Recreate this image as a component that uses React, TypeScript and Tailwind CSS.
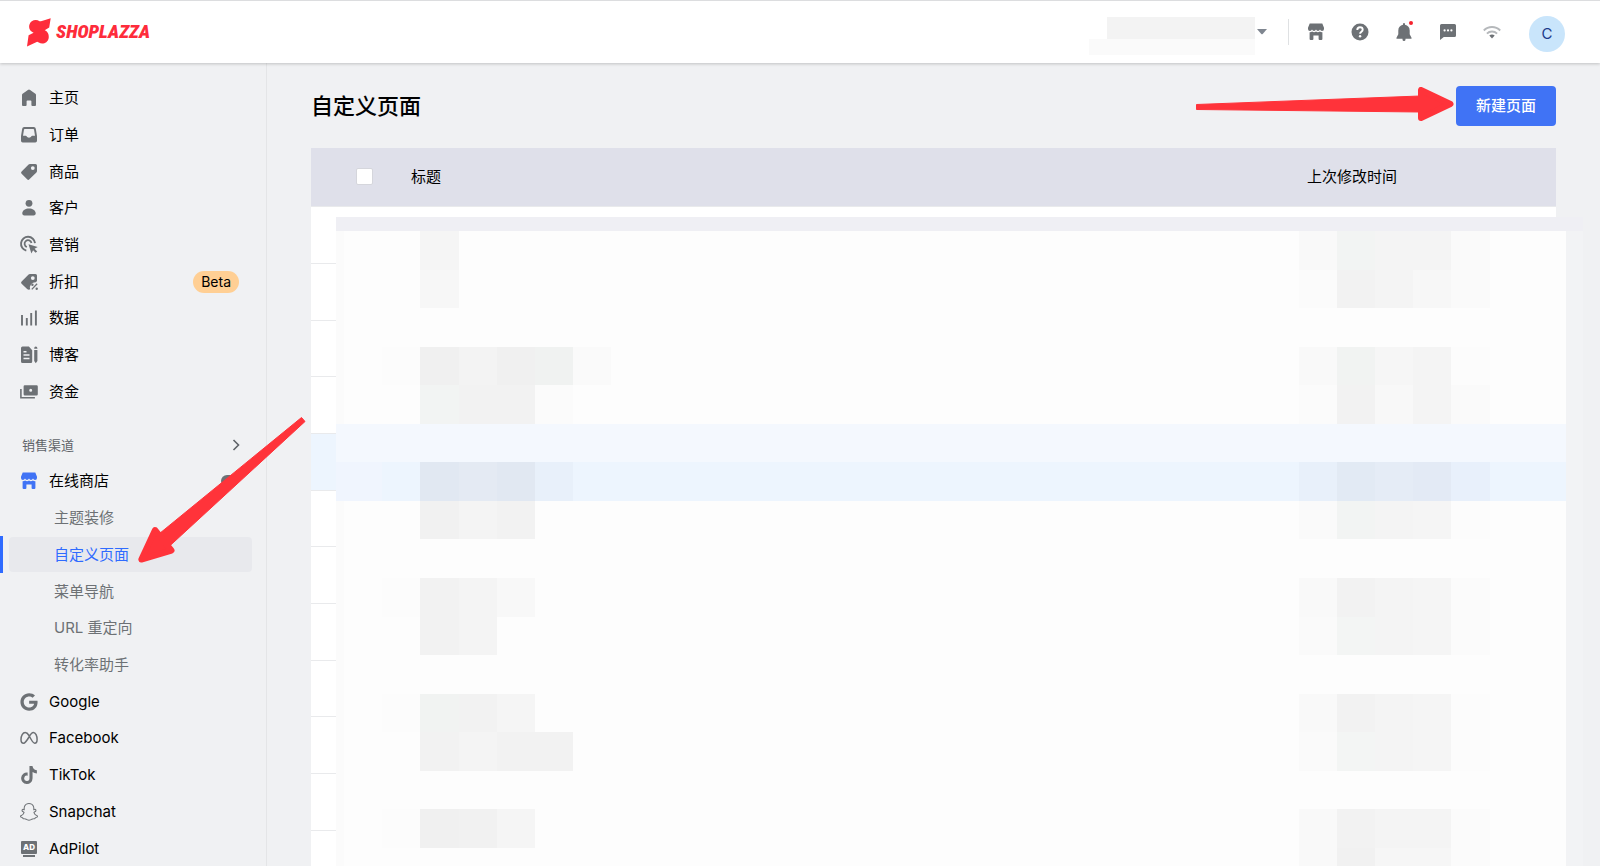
import React, { ReactNode, useState } from "react";
import { FaGoogle, FaTiktok } from "react-icons/fa";
import { BsSnapchat } from "react-icons/bs";

const Icon = ({ children }: { children: ReactNode }) => (
  <svg
    viewBox="0 0 18 18"
    fill="currentColor"
    className="w-[18px] h-[18px] shrink-0 overflow-visible"
    aria-hidden="true"
  >
    {children}
  </svg>
);

const storePath =
  "M2.7.6h12.6l1.7 4.2v1.1a2 2 0 0 1-2 2 2.2 2.2 0 0 1-2-1.3 2.2 2.2 0 0 1-4 0 2.2 2.2 0 0 1-4 0 2.2 2.2 0 0 1-2 1.3 2 2 0 0 1-2-2V4.800zM2.600 9.300c1 .1 1.800-.2 2.500-.8a3.500 3.500 0 0 0 3.900.1 3.500 3.500 0 0 0 3.900-.1c.7.6 1.500.9 2.500.8v6.700a1 1 0 0 1-1 1h-1.800a1 1 0 0 1-1-1v-3.500H6.400V16a1 1 0 0 1-1 1H3.600a1 1 0 0 1-1-1z";

const StoreIcon = () => (
  <Icon>
    <path d={storePath} />
  </Icon>
);

const mainMenu = [
  {
    name: "主页",
    icon: (
      <Icon>
        <path d="M7.900.9a1.800 1.800 0 0 1 2.200 0l5.300 3.900c.4.3.6.7.6 1.200V16a1 1 0 0 1-1 1h-2.600a1 1 0 0 1-1-1v-3.800a.8.8 0 0 0-.8-.8H7.400a.8.8 0 0 0-.8.8V16a1 1 0 0 1-1 1H3a1 1 0 0 1-1-1V6c0-.5.2-.9.6-1.200z" />
      </Icon>
    ),
  },
  {
    name: "订单",
    icon: (
      <Icon>
        <path
          fillRule="evenodd"
          d="M4.200 1h9.600a2 2 0 0 1 2 1.700L17 10v4.800a1.700 1.700 0 0 1-1.700 1.700H2.700A1.700 1.700 0 0 1 1 14.800V10l1.200-7.300a2 2 0 0 1 2-1.700zm.5 1.900a.7.7 0 0 0-.7.6L3 9.800h2.700c.6 0 .8.3 1.100.7.4.7 1.200 1.200 2.200 1.200s1.800-.5 2.200-1.200c.3-.4.5-.7 1.100-.7H15L14 3.500a.7.7 0 0 0-.7-.6z"
        />
      </Icon>
    ),
  },
  {
    name: "商品",
    icon: (
      <Icon>
        <path
          fillRule="evenodd"
          d="M9.900.9h5.600A1.500 1.500 0 0 1 17 2.400V8c0 .5-.2 1-.6 1.400l-7 6.900a1.600 1.600 0 0 1-2.300 0l-5.500-5.500a1.600 1.600 0 0 1 0-2.300l7-7c.3-.4.8-.6 1.300-.6zM12.800 7a1.900 1.900 0 1 0 0-3.800 1.900 1.900 0 0 0 0 3.800z"
        />
      </Icon>
    ),
  },
  {
    name: "客户",
    icon: (
      <Icon>
        <circle cx="9" cy="4.300" r="3.400" />
        <path d="M9 9.500c3.600 0 6.300 1.700 6.700 4.600.2 1.400-.7 2.400-2.100 2.400H4.400c-1.400 0-2.300-1-2.100-2.400C2.700 11.200 5.400 9.500 9 9.500z" />
      </Icon>
    ),
  },
  {
    name: "营销",
    icon: (
      <Icon>
        <path
          d="M6.300 14.600A7 7 0 1 1 15 7.200"
          fill="none"
          stroke="currentColor"
          strokeWidth="1.900"
        />
        <path
          d="M6.900 11a3.500 3.500 0 1 1 4.600-4"
          fill="none"
          stroke="currentColor"
          strokeWidth="1.800"
        />
        <path d="M8.500 8.300l9.200 2.700-3.100 1.700 2.600 2.700-1.600 1.400-2.500-2.500-1.700 3.300z" />
      </Icon>
    ),
  },
  {
    name: "折扣",
    badge: "Beta",
    icon: (
      <Icon>
        <path
          fillRule="evenodd"
          d="M9.900.9h5.600A1.500 1.500 0 0 1 17 2.400V8l-1.200 1.200a5.500 5.500 0 0 0-5.600 7.200l-.6.200c-1 .2-1.700 0-2.500-.7l-5.500-5.100a1.600 1.600 0 0 1 0-2.300l7-7c.3-.4.8-.6 1.300-.6zM12.800 7a1.900 1.900 0 1 0 0-3.800 1.900 1.900 0 0 0 0 3.800z"
        />
        <path d="M11.800 16.400l5.300-5.600" stroke="currentColor" strokeWidth="1.300" />
        <circle cx="12.400" cy="11.700" r="1.200" />
        <circle cx="16.700" cy="15.700" r="1.200" />
      </Icon>
    ),
  },
  {
    name: "数据",
    icon: (
      <Icon>
        <path
          d="M2 6v10.500M6.800 9v7.500M11.200 4v12.500M15.900 1.500v15"
          stroke="currentColor"
          strokeWidth="1.900"
        />
      </Icon>
    ),
  },
  {
    name: "博客",
    icon: (
      <Icon>
        <path
          fillRule="evenodd"
          d="M2.500.6h6.400l3.300 3.600V15.800a1.300 1.300 0 0 1-1.300 1.300H2.500a1.500 1.500 0 0 1-1.500-1.500V2.100A1.500 1.500 0 0 1 2.500.6zM3.500 5v1.500h3V5zm0 3.300v1.500h6V8.300zm0 3.400v1.500h6v-1.500z"
        />
        <path d="M14.200 2.200a1.600 1.600 0 0 1 3.200 0v.6h-3.200zM14.200 4h3.200v11l-1.600 2.300L14.200 15z" />
      </Icon>
    ),
  },
  {
    name: "资金",
    icon: (
      <Icon>
        <path
          fillRule="evenodd"
          d="M4.800 2.300h11.800a1.200 1.200 0 0 1 1.200 1.200v7.700a1.200 1.200 0 0 1-1.200 1.200H4.800a1.200 1.200 0 0 1-1.200-1.200V3.500a1.200 1.200 0 0 1 1.200-1.200zm5.900 6.400a1.500 1.500 0 1 0 0-3 1.500 1.500 0 0 0 0 3z"
        />
        <path d="M.9 6v8.700h14" fill="none" stroke="currentColor" strokeWidth="1.600" />
      </Icon>
    ),
  },
];

const storePages = ["主题装修", "自定义页面", "菜单导航", "URL 重定向", "转化率助手"];

const channels = [
  { name: "Google", icon: <FaGoogle className="w-[18px] h-[18px] shrink-0" /> },
  {
    name: "Facebook",
    icon: (
      <Icon>
        <path
          d="M9 6.500C7.800 4.500 6.700 3.500 5.200 3.500 2.800 3.500 1 6.800 1 10.400c0 2.300 1 3.800 2.600 3.800 1.700 0 2.800-1.700 5.400-6.200 1.400-2.600 2.400-4.500 4.400-4.500 2.200 0 3.700 3.300 3.700 6.900 0 2.300-.9 3.800-2.500 3.800S12 12.500 9 6.500z"
          fill="none"
          stroke="currentColor"
          strokeWidth="1.500"
        />
      </Icon>
    ),
  },
  { name: "TikTok", icon: <FaTiktok className="w-[18px] h-[18px] shrink-0" /> },
  { name: "Snapchat", icon: <BsSnapchat className="w-[18px] h-[18px] shrink-0" /> },
  {
    name: "AdPilot",
    icon: (
      <span className="w-[18px] flex flex-col items-center gap-px shrink-0" aria-hidden="true">
        <span className="w-4 h-[13px] rounded-[1px] bg-[#6d7175] text-white text-[8px] leading-[13px] font-extrabold text-center">
          AD
        </span>
        <span className="w-3 h-[2px] bg-[#6d7175]" />
      </span>
    ),
  },
];

// [row, rowSpan, col, colSpan, color], column 0 is the narrow left edge
type Block = [number, number, number, number, string];

const blocks: Block[] = [
  [1, 18, 0, 1, "#fbfbfb"],
  // title column
  [1, 1, 3, 1, "#f5f5f5"],
  [2, 1, 3, 1, "#f7f7f7"],
  [4, 1, 2, 1, "#fcfcfc"],
  [4, 1, 3, 1, "#f0f0f0"],
  [4, 1, 4, 1, "#f3f3f3"],
  [4, 1, 5, 1, "#f0f0f0"],
  [4, 1, 6, 1, "#f0f2f1"],
  [4, 1, 7, 1, "#fafafa"],
  [5, 1, 3, 1, "#f2f4f3"],
  [5, 1, 4, 2, "#f2f2f2"],
  [5, 1, 6, 1, "#fbfbfb"],
  // highlighted row
  [6, 1, 0, 33, "#f4f8fe"],
  [7, 1, 0, 2, "#f0f5fe"],
  [7, 1, 2, 31, "#edf5fe"],
  [7, 1, 3, 1, "#e1e8f2"],
  [7, 1, 4, 1, "#e4eaf3"],
  [7, 1, 5, 1, "#e1e8f2"],
  [7, 1, 6, 1, "#e8f0fa"],
  [8, 1, 3, 1, "#f1f1f1"],
  [8, 1, 4, 1, "#f4f4f4"],
  [8, 1, 5, 1, "#f2f2f2"],
  [10, 1, 2, 1, "#fcfcfc"],
  [10, 2, 3, 1, "#f2f2f2"],
  [10, 2, 4, 1, "#f4f4f4"],
  [10, 1, 5, 1, "#f8f8f8"],
  [13, 1, 2, 1, "#fcfcfc"],
  [13, 1, 3, 1, "#f1f3f2"],
  [13, 1, 4, 1, "#f2f2f2"],
  [13, 1, 5, 1, "#f5f5f5"],
  [14, 1, 3, 1, "#f2f2f2"],
  [14, 1, 4, 1, "#f4f4f4"],
  [14, 1, 5, 2, "#f2f2f2"],
  [16, 1, 2, 1, "#fcfcfc"],
  [16, 1, 3, 1, "#f0f0f0"],
  [16, 1, 4, 1, "#f1f1f1"],
  [16, 1, 5, 1, "#f5f5f5"],
  // time column
  [1, 1, 26, 1, "#f9f9f9"],
  [1, 1, 27, 1, "#f2f4f3"],
  [1, 1, 28, 2, "#f4f4f4"],
  [1, 2, 30, 1, "#fafafa"],
  [2, 1, 26, 1, "#fbfbfb"],
  [2, 1, 27, 1, "#f2f2f2"],
  [2, 1, 28, 1, "#f4f4f4"],
  [2, 1, 29, 1, "#f7f7f7"],
  [4, 1, 26, 1, "#f9f9f9"],
  [4, 1, 27, 1, "#f1f3f2"],
  [4, 1, 28, 1, "#f6f6f6"],
  [4, 2, 29, 1, "#f4f4f4"],
  [4, 1, 30, 1, "#fcfcfc"],
  [5, 1, 26, 1, "#fbfbfb"],
  [5, 1, 27, 1, "#f2f2f2"],
  [5, 1, 28, 1, "#f8f8f8"],
  [5, 1, 30, 1, "#fafafa"],
  [7, 1, 26, 1, "#e8f0fa"],
  [7, 1, 27, 1, "#e2eaf4"],
  [7, 1, 28, 1, "#e5ecf6"],
  [7, 1, 29, 1, "#e3eaf5"],
  [7, 1, 30, 1, "#e8f0fb"],
  [8, 1, 26, 1, "#fafafa"],
  [8, 1, 27, 1, "#f2f4f3"],
  [8, 1, 28, 1, "#f4f4f4"],
  [8, 1, 29, 1, "#f5f5f5"],
  [8, 1, 30, 1, "#fcfcfc"],
  [10, 1, 26, 1, "#f9f9f9"],
  [10, 1, 27, 1, "#f2f2f2"],
  [10, 2, 28, 1, "#f4f4f4"],
  [10, 2, 29, 1, "#f5f5f5"],
  [10, 2, 30, 1, "#fbfbfb"],
  [11, 1, 26, 1, "#fafafa"],
  [11, 1, 27, 1, "#f3f5f4"],
  [13, 1, 26, 1, "#f9f9f9"],
  [13, 1, 27, 1, "#f2f2f2"],
  [13, 2, 28, 1, "#f4f4f4"],
  [13, 2, 29, 1, "#f5f5f5"],
  [13, 2, 30, 1, "#fcfcfc"],
  [14, 1, 26, 1, "#fafafa"],
  [14, 1, 27, 1, "#f3f5f4"],
  [16, 2, 26, 1, "#f9f9f9"],
  [16, 1, 27, 1, "#f2f2f2"],
  [16, 1, 28, 2, "#f4f4f4"],
  [16, 2, 30, 1, "#fbfbfb"],
  [17, 1, 27, 1, "#f1f1f1"],
  [17, 1, 28, 2, "#f6f6f6"],
];

const Header = () => (
  <header className="relative z-10 flex h-[63px] shrink-0 items-center justify-between border-t border-[#dcdddf] bg-white pl-[26px] pr-[35px] shadow-[0_1px_3px_rgba(0,0,0,0.2)]">
    <a href="#" className="flex items-center gap-1 text-[#fe2c3b]">
      <svg viewBox="0 0 26 30" className="w-[26px] h-[30px]" fill="currentColor" aria-hidden="true">
        <path d="M24.700 1.300 23.200 10.600 18.700 13.200C22 14.500 23.200 18 22.700 21 21.800 26 16.500 28 12.800 25.600L11.200 24.800 1 29.400 2.600 18.200 7.600 15.700C4 14.300 2.600 11 3.300 8 4.500 3.400 10 1.800 13.500 4.300L15 4.200z" />
      </svg>
      <span className="font-['Roboto_Condensed','Liberation_Sans_Narrow',sans-serif] text-[19px] leading-7 font-black italic">
        SHOPLAZZA
      </span>
    </a>
    <div className="flex items-center text-[#6d7175]">
      <button className="flex items-center gap-[2px]" aria-label="切换店铺">
        <span className="mt-2 w-[166px]">
          <span className="block ml-[18px] h-[22px] bg-[#f3f3f3]" />
          <span className="block h-4 bg-[#fafafa]" />
        </span>
        <svg viewBox="0 0 10 6" className="w-[10px] h-[6px]" fill="#7f8690">
          <path d="M0 0h10L5.700 5a1 1 0 0 1-1.400 0z" />
        </svg>
      </button>
      <span className="ml-[21px] w-px h-[26px] bg-[#dfe1e3]" />
      <div className="ml-[18px] flex items-center gap-[26px]">
        <button aria-label="店铺">
          <StoreIcon />
        </button>
        <button aria-label="帮助">
          <Icon>
            <circle cx="9" cy="9" r="8.500" />
            <path
              d="M6.300 6.900C6.300 5.300 7.400 4.300 9 4.300s2.700 1 2.700 2.400c0 2-2.600 1.900-2.600 4"
              fill="none"
              stroke="white"
              strokeWidth="1.900"
            />
            <circle cx="9.100" cy="13.200" r="1.200" fill="white" />
          </Icon>
        </button>
        <button aria-label="通知" className="relative">
          <Icon>
            <path d="M8 1.800V1a1 1 0 0 1 2 0v.8c2.900.5 4.700 2.700 4.700 5.700v3.700l1.800 3.600c.3.500 0 1-.6 1H10.500v.6a1.500 1.500 0 0 1-3 0v-.6H2.100c-.6 0-.9-.5-.6-1l1.800-3.600V7.500C3.300 4.500 5.100 2.300 8 1.800z" />
          </Icon>
          <span className="absolute -top-[2px] right-0 w-1 h-1 rounded-full bg-[#f5222d]" />
        </button>
        <button aria-label="消息">
          <Icon>
            <path d="M2.500.9h13A1.500 1.500 0 0 1 17 2.400v10a1.500 1.500 0 0 1-1.500 1.500H4.800L1 17V2.400A1.500 1.500 0 0 1 2.500.9z" />
            <g fill="white">
              <circle cx="5.600" cy="7.400" r="1.100" />
              <circle cx="9" cy="7.400" r="1.100" />
              <circle cx="12.400" cy="7.400" r="1.100" />
            </g>
          </Icon>
        </button>
        <button aria-label="网络">
          <Icon>
            <g fill="none" stroke="#b5b8bb" strokeWidth="1.900">
              <path d="M.8 7.500c4.600-4.600 11.800-4.600 16.400 0" />
              <path d="M3.900 10.600c2.900-2.900 7.300-2.900 10.200 0" />
            </g>
            <path d="M6.300 12.600c1.600-1.400 3.800-1.400 5.400 0L9 15.600z" />
          </Icon>
        </button>
      </div>
      <button className="ml-[28px] mt-1 w-9 h-9 rounded-full bg-[#c9e5fb] text-[15px] text-[#1c3a8a]">
        C
      </button>
    </div>
  </header>
);

const Sidebar = () => (
  <aside className="relative w-[267px] shrink-0 border-r border-[#e4e5e7] pt-[17px]">
    <nav>
      <ul className="grid h-[330px] auto-rows-fr">
        {mainMenu.map((item, i) => (
          <li key={i} className="flex items-center pl-5 pr-[27px]">
            <a href="#" className="flex items-center gap-[11px] text-[#6d7175]">
              {item.icon}
              <span className="text-black">{item.name}</span>
            </a>
            {item.badge && (
              <span className="ml-auto rounded-full bg-[#ffcf94] px-2 text-[14px] leading-[22px]">
                {item.badge}
              </span>
            )}
          </li>
        ))}
      </ul>
      <button className="flex w-full items-center justify-between pl-[22px] pr-[25px] pt-6 pb-[7px] text-[13px] leading-[22px] text-[#5f6368]">
        销售渠道
        <svg viewBox="0 0 10 12" className="w-[10px] h-3" fill="none" stroke="currentColor" strokeWidth="1.600">
          <path d="M2.500 1l5 5-5 5" />
        </svg>
      </button>
      <ul className="grid h-[404px] auto-rows-fr">
        <li className="flex items-center pl-5 pr-[27px]">
          <a href="#" className="flex items-center gap-[11px] text-[#4073f5]">
            <StoreIcon />
            <span className="text-black">在线商店</span>
          </a>
          <span className="ml-auto mr-[2px] w-4 h-3 rounded-full bg-[#6d7175]" />
        </li>
        {storePages.map((name, i) =>
          name === "自定义页面" ? (
            <li key={i} className="flex items-center border-l-[3px] border-[#2f6bff] pl-[6px] pr-[14px]">
              <a href="#" className="w-full rounded-sm bg-[#e8e9ed] pl-[45px] leading-[35px] text-[#2f6bff]">
                {name}
              </a>
            </li>
          ) : (
            <li key={i} className="flex items-center pl-[54px]">
              <a href="#" className="text-[#6d7175]">
                {name}
              </a>
            </li>
          )
        )}
        {channels.map((item, i) => (
          <li key={i} className="flex items-center pl-5">
            <a href="#" className="flex items-center gap-[11px] text-[#6d7175]">
              {item.icon}
              <span className="text-black">{item.name}</span>
            </a>
          </li>
        ))}
      </ul>
    </nav>
    <svg
      viewBox="0 0 168 148"
      className="absolute left-[138px] top-[353px] z-20 w-[168px] h-[148px]"
      fill="#ff333a"
      stroke="#ff333a"
      aria-hidden="true"
    >
      <path d="M163.500 1.500 167 5.500 32.700 129 20 130 21.500 117.500z" strokeWidth="1" />
      <path d="M3.300 143.500 17 114 33.500 134.500z" strokeWidth="6" strokeLinejoin="round" />
    </svg>
  </aside>
);

// Pixelated cover that hides the merchant's own rows
const Mosaic = () => (
  <div className="absolute top-[69px] left-[25px] -right-[27px] bottom-0 overflow-hidden border-t-[14px] border-[#efeff4] bg-[#f2f3f5]">
    <div className="mr-[17px] grid h-[694px] grid-cols-[8px_repeat(32,1fr)] grid-rows-[repeat(18,1fr)] bg-[#fdfdfd]">
      {blocks.map(([row, rowSpan, col, colSpan, color], i) => (
        <div
          key={i}
          style={{
            gridArea: `${row} / ${col + 1} / span ${rowSpan} / span ${colSpan}`,
            background: color,
          }}
        />
      ))}
    </div>
  </div>
);

const Pages = () => {
  const [checked, setChecked] = useState(false);

  return (
    <main className="min-w-0 flex-1 px-11 pt-[23px]">
      <div className="flex items-center justify-between">
        <h1 className="text-[22px] leading-8 font-medium">自定义页面</h1>
        <div className="flex items-center gap-[2px]">
          <svg viewBox="0 0 258 38" className="w-[258px] h-[38px]" fill="#ff333a" stroke="#ff333a" aria-hidden="true">
            <path d="M.5 17.500V22.500L224 25V9z" strokeWidth="1" />
            <path d="M225 3V31L254.500 17z" strokeWidth="6" strokeLinejoin="round" />
          </svg>
          <button className="h-10 rounded-sm bg-[#4073f5] px-5 font-medium text-white">
            新建页面
          </button>
        </div>
      </div>
      <div className="relative mt-[22px]">
        <table className="w-full table-fixed border-collapse rounded-t-sm bg-white text-left">
          <thead>
            <tr className="h-[58px] bg-[#dfe0ea]">
              <th className="w-[100px] p-0 pl-[45px] align-middle">
                <input
                  type="checkbox"
                  aria-label="全选"
                  checked={checked}
                  onChange={() => setChecked(!checked)}
                  className="block w-[17px] h-[17px] appearance-none rounded-xs border border-[#d5d6dc] bg-white checked:bg-[#4073f5]"
                />
              </th>
              <th className="p-0 font-normal">标题</th>
              <th className="w-[249px] p-0 font-normal">上次修改时间</th>
            </tr>
          </thead>
          <tbody>
            {Array.from({ length: 12 }).map((_, i) => (
              <tr
                key={i}
                className={`h-[57px] border-t border-[#e9eaec] nth-[3n]:h-[56px] ${i === 4 ? "bg-[#edf5fe]" : ""}`}
              >
                <td className="p-0"></td>
                <td className="p-0"></td>
                <td className="p-0"></td>
              </tr>
            ))}
          </tbody>
        </table>
        <Mosaic />
      </div>
    </main>
  );
};

const App = () => (
  <div className="flex h-screen flex-col overflow-hidden bg-[#f0f1f3] font-[Inter,'Noto_Sans_CJK_SC',sans-serif] text-[15px] leading-6 text-black">
    <Header />
    <div className="flex min-h-0 flex-1">
      <Sidebar />
      <Pages />
    </div>
  </div>
);

export default App;
